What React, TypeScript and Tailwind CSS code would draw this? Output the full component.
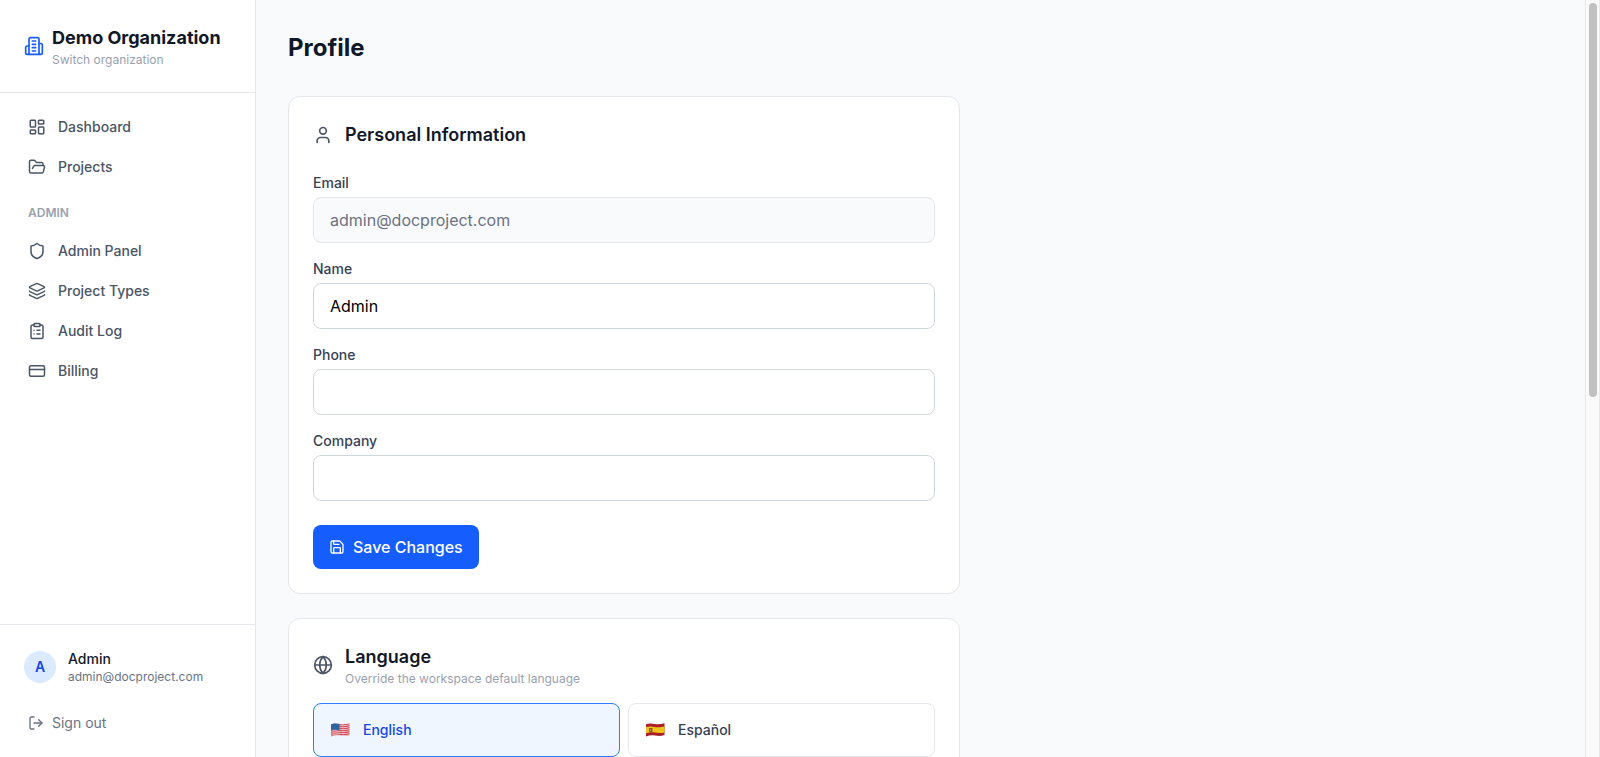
import { FC, useState } from "react";
import {
  LayoutDashboard,
  FolderOpen,
  Shield,
  Layers,
  ClipboardList,
  CreditCard,
  LogOut,
  User,
  Globe,
  Save,
} from "lucide-react";

const mainLinks = [
  { label: "Dashboard", icon: LayoutDashboard },
  { label: "Projects", icon: FolderOpen },
];

const adminLinks = [
  { label: "Admin Panel", icon: Shield },
  { label: "Project Types", icon: Layers },
  { label: "Audit Log", icon: ClipboardList },
  { label: "Billing", icon: CreditCard },
];

const BuildingIcon: FC = () => (
  <svg
    viewBox="0 0 24 24"
    fill="none"
    stroke="currentColor"
    strokeWidth="2"
    strokeLinecap="round"
    strokeLinejoin="round"
    className="w-5 h-5 shrink-0 text-blue-600"
  >
    <path d="M6 22V4a2 2 0 0 1 2-2h8a2 2 0 0 1 2 2v18Z" />
    <path d="M6 12H4a2 2 0 0 0-2 2v6a2 2 0 0 0 2 2h2" />
    <path d="M18 9h2a2 2 0 0 1 2 2v9a2 2 0 0 1-2 2h-2" />
    <path d="M10 6h4M10 10h4M10 14h4M10 18h4" />
  </svg>
);

const UsFlag: FC = () => (
  <svg viewBox="0 0 21 16" className="w-[21px] h-4">
    <clipPath id="us">
      <path d="M1 2.2C4 1 7 1.500 10 2S16 2.200 19.500 1.200V13C16 14.200 13 14 10 13.500S4 13.200 1 14.600Z" />
    </clipPath>
    <g clipPath="url(#us)">
      <path fill="#f0d3d8" d="M0 0h21v16H0z" />
      <g fill="none" stroke="#d14a58" strokeWidth="1.1">
        <path d="M0 2.500C4 1 7 1.800 10 2.400S16 2.800 21 1.400" />
        <path d="M0 4.500C4 3 7 3.800 10 4.400S16 4.800 21 3.400" />
        <path d="M0 6.500C4 5 7 5.800 10 6.400S16 6.800 21 5.400" />
        <path d="M0 8.500C4 7 7 7.800 10 8.400S16 8.800 21 7.400" />
        <path d="M0 10.500C4 9 7 9.800 10 10.400S16 10.800 21 9.400" />
        <path d="M0 12.500C4 11 7 11.800 10 12.400S16 12.800 21 11.400" />
        <path d="M0 14.500C4 13 7 13.800 10 14.400S16 14.800 21 13.400" />
      </g>
      <path fill="#2f639f" d="M0 0h9.500v8.400C7 7.800 4 7.200 0 8.600Z" />
    </g>
  </svg>
);

const EsFlag: FC = () => (
  <svg viewBox="0 0 21 16" className="w-[21px] h-4">
    <clipPath id="es">
      <path d="M1 2.200C4 1 7 1.500 10 2S16 2.200 19.500 1.200V13C16 14.200 13 14 10 13.500S4 13.200 1 14.600Z" />
    </clipPath>
    <g clipPath="url(#es)">
      <path fill="#a91f28" d="M0 0h21v16H0z" />
      <path fill="#efc31a" d="M0 5.400C4 4 7 4.500 10 5S16 5.400 21 4V10.200C16 11.400 13 11 10 10.500S4 10.200 0 11.600Z" />
      <path fill="#9a5424" d="M4 6h3.500v3a1.700 1.700 0 0 1-3.500 0Z" />
      <path fill="#d8b568" d="M5.200 7.200h1v1.500h-1z" />
    </g>
  </svg>
);

const languages = [
  { code: "en", label: "English", flag: UsFlag },
  { code: "es", label: "Español", flag: EsFlag },
];

const fields = [
  { id: "email", label: "Email", type: "email", value: "admin@docproject.com", disabled: true },
  { id: "name", label: "Name", type: "text", value: "Admin", disabled: false },
  { id: "phone", label: "Phone", type: "tel", value: "", disabled: false },
  { id: "company", label: "Company", type: "text", value: "", disabled: false },
];

const NavLink: FC<{ label: string; icon: typeof Shield }> = ({ label, icon: Icon }) => (
  <a
    href="#"
    className="flex items-center gap-3 px-3 py-2 rounded-lg text-sm font-medium text-gray-600 hover:bg-gray-50"
  >
    <Icon className="w-[18px] h-[18px]" />
    {label}
  </a>
);

const Sidebar: FC = () => (
  <aside className="w-64 shrink-0 flex flex-col bg-white border-r border-gray-200">
    <div className="p-6 border-b border-gray-200">
      <a href="#" className="flex items-center gap-2">
        <BuildingIcon />
        <div>
          <h1 className="text-lg font-bold text-gray-900 whitespace-nowrap">Demo Organization</h1>
          <p className="text-xs text-gray-400">Switch organization</p>
        </div>
      </a>
    </div>

    <nav className="flex-1 p-4 space-y-1">
      {mainLinks.map((link) => (
        <NavLink key={link.label} {...link} />
      ))}
      <p className="px-3 pt-4 pb-2 text-xs font-semibold text-gray-400 uppercase">Admin</p>
      {adminLinks.map((link) => (
        <NavLink key={link.label} {...link} />
      ))}
    </nav>

    <div className="p-4 border-t border-gray-200">
      <a href="#" className="flex items-center gap-3 p-2 mb-3">
        <div className="w-8 h-8 rounded-full bg-blue-100 flex items-center justify-center text-sm font-semibold text-blue-700">
          A
        </div>
        <div>
          <p className="text-sm font-medium text-gray-900">Admin</p>
          <p className="text-xs text-gray-500">admin@docproject.com</p>
        </div>
      </a>
      <button className="flex items-center gap-2 w-full px-3 py-2 rounded-lg text-sm text-gray-500 hover:bg-gray-50">
        <LogOut className="w-4 h-4" />
        Sign out
      </button>
    </div>
  </aside>
);

const App: FC = () => {
  const [language, setLanguage] = useState("en");

  return (
    <div className="flex h-screen bg-gray-50 font-['Inter',sans-serif]">
      <Sidebar />

      <main className="flex-1 p-8 overflow-hidden">
        <h1 className="mb-8 text-2xl font-bold text-gray-900">Profile</h1>

        <div className="max-w-2xl space-y-6">
          <section className="p-6 bg-white border border-gray-200 rounded-xl">
            <div className="flex items-center gap-3 mb-6">
              <User className="w-5 h-5 text-gray-600" />
              <h2 className="text-lg font-semibold text-gray-900">Personal Information</h2>
            </div>
            <form className="space-y-4" onSubmit={(e) => e.preventDefault()}>
              {fields.map((field) => (
                <div key={field.id}>
                  <label htmlFor={field.id} className="block mb-1 text-sm font-medium text-gray-700">
                    {field.label}
                  </label>
                  <input
                    id={field.id}
                    type={field.type}
                    defaultValue={field.value}
                    disabled={field.disabled}
                    className="block w-full px-4 py-2.5 border border-gray-300 rounded-lg text-black disabled:border-gray-200 disabled:bg-gray-50 disabled:text-gray-500"
                  />
                </div>
              ))}
              <div className="pt-2">
                <button
                  type="submit"
                  className="flex items-center gap-2 px-4 py-2.5 bg-blue-600 text-white font-medium rounded-lg hover:bg-blue-700"
                >
                  <Save className="w-4 h-4" />
                  Save Changes
                </button>
              </div>
            </form>
          </section>

          <section className="p-6 bg-white border border-gray-200 rounded-xl">
            <div className="flex items-center gap-3 mb-4">
              <Globe className="w-5 h-5 text-gray-600" />
              <div>
                <h2 className="text-lg font-semibold text-gray-900">Language</h2>
                <p className="text-xs text-gray-400">Override the workspace default language</p>
              </div>
            </div>
            <div className="grid grid-cols-2 gap-2">
              {languages.map(({ code, label, flag: Flag }) => (
                <button
                  key={code}
                  onClick={() => setLanguage(code)}
                  className={`flex items-center gap-3 h-[54px] px-4 border rounded-lg text-sm font-medium ${
                    language === code
                      ? "border-blue-500 bg-blue-50 text-blue-700"
                      : "border-gray-200 text-gray-700 hover:bg-gray-50"
                  }`}
                >
                  <Flag />
                  {label}
                </button>
              ))}
            </div>
          </section>
        </div>
      </main>

      {/* scrollbar track */}
      <div className="w-[15px] shrink-0 border-x border-x-[#e8e8e8] bg-[#fafafa] pt-[3px] pl-[3px]">
        <div className="w-2 h-[394px] rounded-full bg-[#c1c1c1]" />
      </div>
    </div>
  );
};

export default App;
